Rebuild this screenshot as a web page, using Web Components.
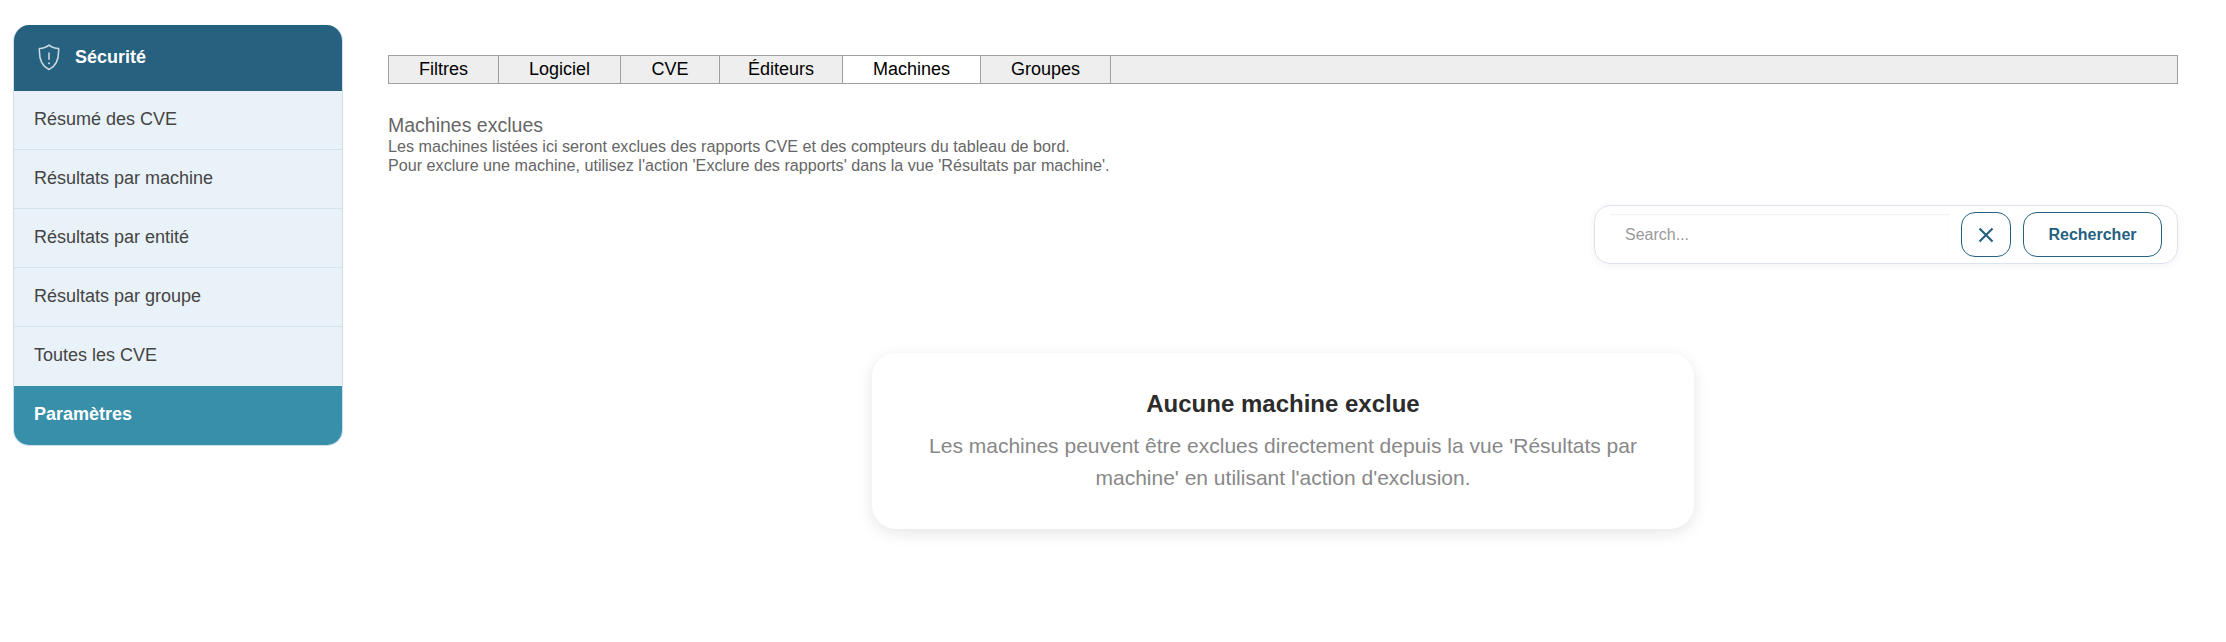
<!DOCTYPE html>
<html lang="fr">
<head>
<meta charset="utf-8">
<title>Sécurité</title>
<style>
    html, body { margin: 0; padding: 0; background: #fff; }
    body { font-family: "Liberation Sans", Arial, sans-serif; }
</style>
</head>
<body>
<security-page>
    <side-menu slot="side" title-text="Sécurité">
        <menu-item>Résumé des CVE</menu-item>
        <menu-item>Résultats par machine</menu-item>
        <menu-item>Résultats par entité</menu-item>
        <menu-item>Résultats par groupe</menu-item>
        <menu-item>Toutes les CVE</menu-item>
        <menu-item active>Paramètres</menu-item>
    </side-menu>
    <tab-bar>
        <tab-item style="width:110px">Filtres</tab-item>
        <tab-item style="width:122px">Logiciel</tab-item>
        <tab-item style="width:99px">CVE</tab-item>
        <tab-item style="width:123px">Éditeurs</tab-item>
        <tab-item active style="width:138px">Machines</tab-item>
        <tab-item style="width:130px">Groupes</tab-item>
    </tab-bar>
    <page-intro heading="Machines exclues">
        Les machines listées ici seront exclues des rapports CVE et des compteurs du tableau de bord.<br>
        Pour exclure une machine, utilisez l'action 'Exclure des rapports' dans la vue 'Résultats par machine'.
    </page-intro>
    <search-box></search-box>
    <empty-card heading="Aucune machine exclue">
        Les machines peuvent être exclues directement depuis la vue 'Résultats par machine' en utilisant l'action d'exclusion.
    </empty-card>
</security-page>

<script>
class SecurityPage extends HTMLElement {
    constructor() {
        super();
        this.attachShadow({ mode: "open" });
        this.shadowRoot.innerHTML = `
        <style>
            :host { display: flex; align-items: flex-start; padding: 25px 48px 0 13px; box-sizing: border-box; height: 642px; }
            main { flex: 1; min-width: 0; margin-left: 45px; padding-top: 30px; }
        </style>
        <slot name="side"></slot>
        <main><slot></slot></main>
        `;
    }
}

class SideMenu extends HTMLElement {
    constructor() {
        super();
        this.attachShadow({ mode: "open" });
        let title = this.getAttribute("title-text");
        this.shadowRoot.innerHTML = `
        <style>
            :host { display: block; width: 330px; flex: none; background: #e9f2f8; border-radius: 16px; overflow: hidden; box-sizing: border-box; border: 1px solid #cfe0ea; border-top: none; }
            header { display: flex; align-items: center; height: 66px; margin: 0 -1px; padding: 0 0 1px 25px; box-sizing: border-box; background: #26617f; color: #fff; font-weight: bold; font-size: 18px; gap: 15px; }
            svg { display: block; }
            .list { display: flex; flex-direction: column; }
        </style>
        <header>
            <svg width="22" height="27" viewBox="0 0 22 27" fill="none" stroke="#c9d8e0" stroke-width="1.6" stroke-linecap="round" stroke-linejoin="round">
                <path d="M11 1.2c2.6 2.2 5.800 3.300 9.600 3.300c.5 10.500-2.200 17.600-9.600 21c-7.400-3.400-10.100-10.500-9.600-21c3.800 0 7-1.100 9.600-3.300z"/>
                <path d="M11 9v6.300"/>
                <path d="M11 19.200v.1" stroke-width="2"/>
            </svg>
            <span>${title}</span>
        </header>
        <div class="list"><slot></slot></div>
        `;
    }
}

class MenuItem extends HTMLElement {
    constructor() {
        super();
        this.attachShadow({ mode: "open" });
        this.shadowRoot.innerHTML = `
        <style>
            :host { display: flex; align-items: center; box-sizing: border-box; height: 59px; padding: 0 0 2px 20px; font-size: 18px; color: #444; border-bottom: 1px solid #d3e3ed; }
            :host([active]) { background: #388fa9; color: #fff; font-weight: bold; border-bottom: none; }
            :host(:nth-last-child(2)) { border-bottom: none; }
        </style>
        <slot></slot>
        `;
    }
}

class TabBar extends HTMLElement {
    constructor() {
        super();
        this.attachShadow({ mode: "open" });
        this.shadowRoot.innerHTML = `
        <style>
            :host { display: flex; box-sizing: border-box; height: 29px; background: #eeeeee; border: 1px solid #a0a0a0; }
        </style>
        <slot></slot>
        `;
    }
}

class TabItem extends HTMLElement {
    constructor() {
        super();
        this.attachShadow({ mode: "open" });
        this.shadowRoot.innerHTML = `
        <style>
            :host { display: flex; align-items: center; justify-content: center; box-sizing: border-box; border-right: 1px solid #a0a0a0; font-size: 18px; color: #000; }
            :host([active]) { background: #fff; }
        </style>
        <slot></slot>
        `;
    }
}

class PageIntro extends HTMLElement {
    constructor() {
        super();
        this.attachShadow({ mode: "open" });
        let heading = this.getAttribute("heading");
        this.shadowRoot.innerHTML = `
        <style>
            :host { display: block; margin-top: 30px; color: #666; }
            h2 { margin: 0; font-size: 19.5px; font-weight: normal; line-height: 23px; color: #666; }
            p { margin: 0; font-size: 16.15px; line-height: 19px; }
        </style>
        <h2>${heading}</h2>
        <p><slot></slot></p>
        `;
    }
}

class SearchBox extends HTMLElement {
    constructor() {
        super();
        this.attachShadow({ mode: "open" });
        this.shadowRoot.innerHTML = `
        <style>
            :host { display: flex; margin: 30px 0 0 auto; box-sizing: border-box; align-items: center; height: 59px; width: 584px; padding: 0 15px; background: #fff; border: 1px solid #dde3ee; border-radius: 16px; box-shadow: 0 2px 8px rgba(0,0,0,.05); }
            input { flex: 1; min-width: 0; height: 42px; box-sizing: border-box; padding: 0 15px; border: none; outline: none; font: 16px "Liberation Sans", Arial, sans-serif; background: #fff; box-shadow: inset 0 1px 2px rgba(0,0,0,.06); margin-right: 12px; }
            input::placeholder { color: #999; }
            button { box-sizing: border-box; height: 45px; background: #fff; border: 1px solid #26617f; border-radius: 14px; color: #26617f; font: bold 16px "Liberation Sans", Arial, sans-serif; display: flex; align-items: center; justify-content: center; padding: 0; }
            .clear { width: 50px; margin-right: 12px; }
            .go { width: 139px; }
        </style>
        <input type="text" placeholder="Search...">
        <button class="clear" aria-label="Effacer">
            <svg width="16" height="16" viewBox="0 0 16 16" fill="none" stroke="#26617f" stroke-width="2.200"><path d="M1.500 1.500l13 13M14.500 1.500l-13 13"/></svg>
        </button>
        <button class="go">Rechercher</button>
        `;
    }
}

class EmptyCard extends HTMLElement {
    constructor() {
        super();
        this.attachShadow({ mode: "open" });
        let heading = this.getAttribute("heading");
        this.shadowRoot.innerHTML = `
        <style>
            :host { display: block; box-sizing: border-box; width: 822px; margin: 89px auto 0; padding: 36px 48px; background: #fff; border-radius: 24px; box-shadow: 0 4px 16px rgba(0,0,0,.1); text-align: center; }
            h3 { margin: 0 0 11px; font-size: 24px; line-height: 30px; color: #2c2c2c; }
            p { margin: 0; font-size: 21px; line-height: 31.500px; color: #888; }
        </style>
        <h3>${heading}</h3>
        <p><slot></slot></p>
        `;
    }
}

customElements.define("security-page", SecurityPage);
customElements.define("side-menu", SideMenu);
customElements.define("menu-item", MenuItem);
customElements.define("tab-bar", TabBar);
customElements.define("tab-item", TabItem);
customElements.define("page-intro", PageIntro);
customElements.define("search-box", SearchBox);
customElements.define("empty-card", EmptyCard);
</script>
</body>
</html>
